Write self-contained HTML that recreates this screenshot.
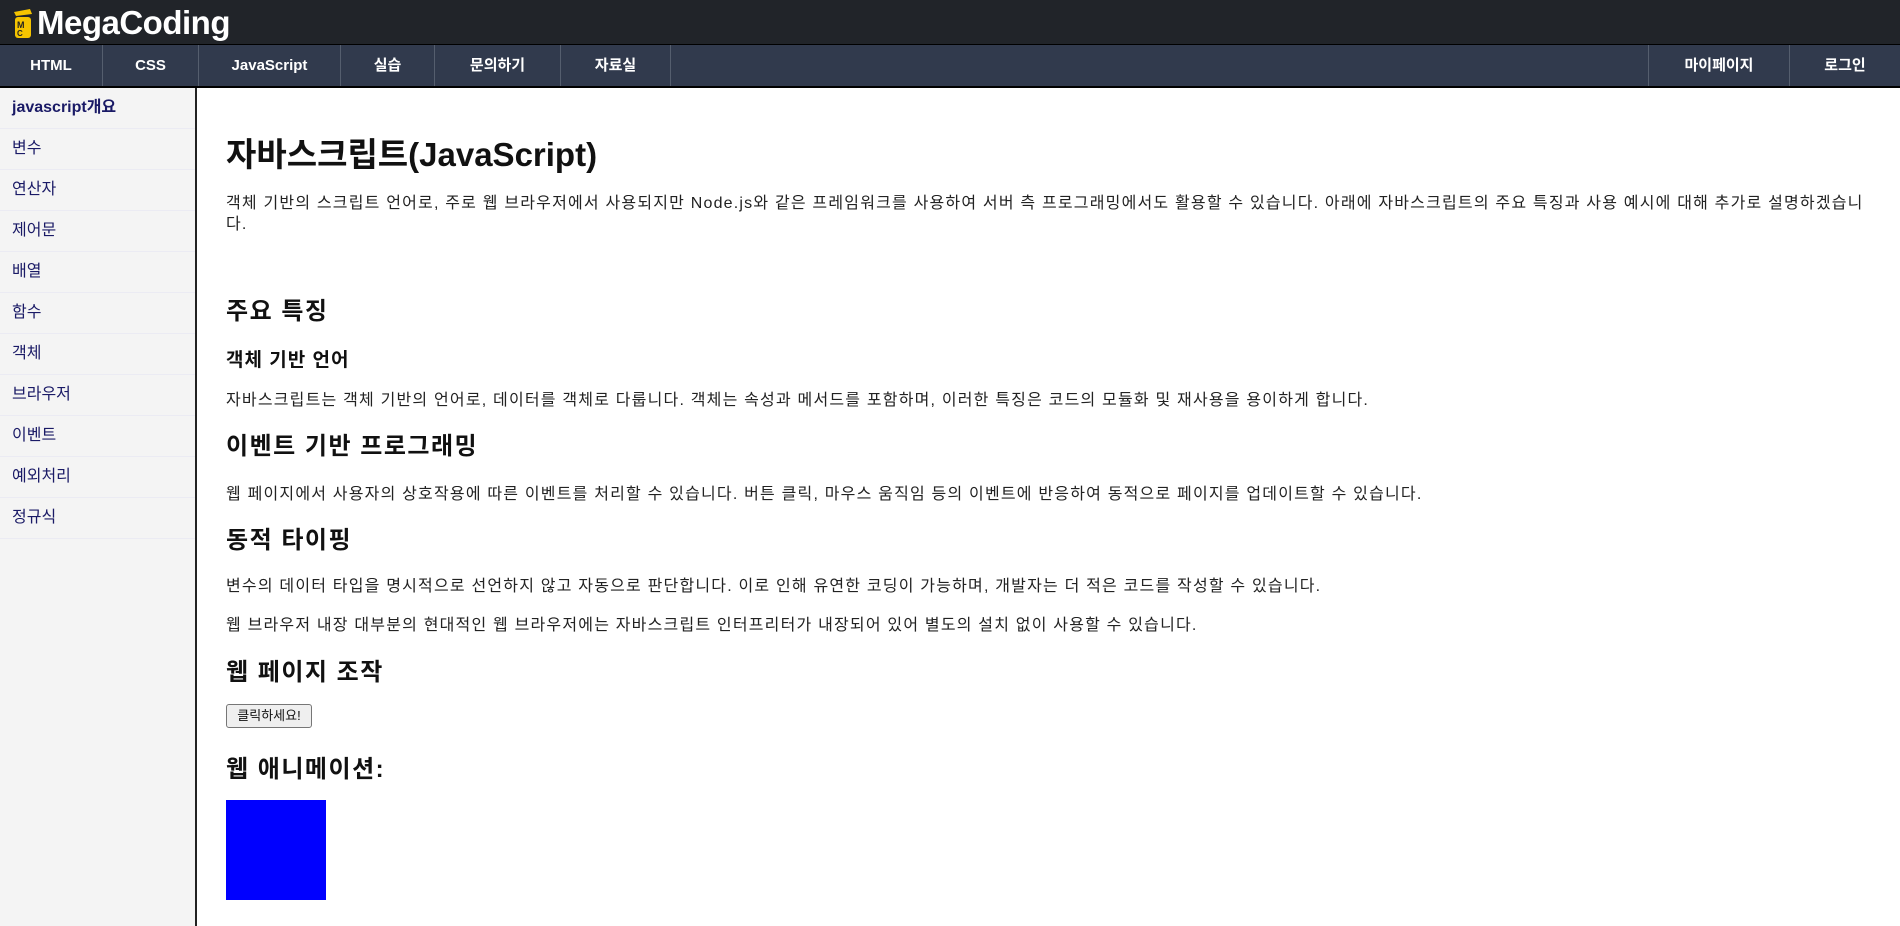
<!DOCTYPE html>
<html><head><meta charset="utf-8"><style>
*{margin:0;padding:0;box-sizing:border-box}
body{width:1900px;height:926px;overflow:hidden;background:#fff;font-family:"Liberation Sans","Noto Sans CJK KR",sans-serif;position:relative}
#top{position:absolute;left:0;top:0;width:1900px;height:45px;background:#212429;border-bottom:1px solid #000}
#logo{position:absolute;left:37px;top:4px;color:#fff;font-weight:bold;font-size:33px;letter-spacing:-0.5px}
#nav{position:absolute;left:0;top:45px;width:1900px;height:43px;background:#313a4d;border-bottom:2px solid #000}
.ni{position:absolute;top:0;height:41px;line-height:41px;color:#fff;font-size:15px;font-weight:bold;text-align:center;border-right:1px solid #555e6e}
#side{position:absolute;left:0;top:88px;width:197px;height:838px;background:#f4f4f4;border-right:2px solid #222}
.si{height:41px;line-height:40px;padding-left:12px;font-size:16px;color:#1a1a66;border-bottom:1px solid #ebebf3}
.t{position:absolute;left:226px;color:#111;white-space:nowrap}
.p{font-size:16px;color:#222;letter-spacing:1.2px}
.h2{font-size:24px;font-weight:bold;letter-spacing:1.5px}
.h3{font-size:19px;font-weight:bold;letter-spacing:1px}
</style></head><body>
<div id="top"><svg style="position:absolute;left:12px;top:8px" width="22" height="32" viewBox="0 0 22 32"><path d="M2 4 L18 1 L20 6 L4 8Z" fill="#f5c400"/><rect x="3" y="9" width="16" height="21" rx="3" fill="#f5c400"/><text x="5" y="20" font-size="9" font-weight="bold" fill="#222" font-family="Liberation Sans">M</text><text x="5" y="28" font-size="8" font-weight="bold" fill="#222" font-family="Liberation Sans">C</text></svg><div id="logo">MegaCoding</div></div>
<div id="nav">
<div class="ni" style="left:0;width:103px">HTML</div>
<div class="ni" style="left:103px;width:96px">CSS</div>
<div class="ni" style="left:199px;width:142px">JavaScript</div>
<div class="ni" style="left:341px;width:94px">실습</div>
<div class="ni" style="left:435px;width:126px">문의하기</div>
<div class="ni" style="left:561px;width:110px">자료실</div>
<div class="ni" style="left:1648px;width:142px;border-left:1px solid #555e6e">마이페이지</div>
<div class="ni" style="left:1790px;width:110px;border-right:none">로그인</div>
</div>
<div id="side">
<div class="si" style="font-weight:bold">javascript개요</div>
<div class="si">변수</div><div class="si">연산자</div><div class="si">제어문</div><div class="si">배열</div><div class="si">함수</div><div class="si">객체</div><div class="si">브라우저</div><div class="si">이벤트</div><div class="si">예외처리</div><div class="si">정규식</div>
</div>
<div class="t" style="top:128px;font-size:33px;font-weight:bold">자바스크립트(JavaScript)</div>
<div class="t p" style="top:193px;line-height:21px">객체 기반의 스크립트 언어로, 주로 웹 브라우저에서 사용되지만 Node.js와 같은 프레임워크를 사용하여 서버 측 프로그래밍에서도 활용할 수 있습니다. 아래에 자바스크립트의 주요 특징과 사용 예시에 대해 추가로 설명하겠습니<br>다.</div>
<div class="t h2" style="top:291px">주요 특징</div>
<div class="t h3" style="top:345px">객체 기반 언어</div>
<div class="t p" style="top:386px">자바스크립트는 객체 기반의 언어로, 데이터를 객체로 다룹니다. 객체는 속성과 메서드를 포함하며, 이러한 특징은 코드의 모듈화 및 재사용을 용이하게 합니다.</div>
<div class="t h2" style="top:426px">이벤트 기반 프로그래밍</div>
<div class="t p" style="top:480px">웹 페이지에서 사용자의 상호작용에 따른 이벤트를 처리할 수 있습니다. 버튼 클릭, 마우스 움직임 등의 이벤트에 반응하여 동적으로 페이지를 업데이트할 수 있습니다.</div>
<div class="t h2" style="top:520px">동적 타이핑</div>
<div class="t p" style="top:572px">변수의 데이터 타입을 명시적으로 선언하지 않고 자동으로 판단합니다. 이로 인해 유연한 코딩이 가능하며, 개발자는 더 적은 코드를 작성할 수 있습니다.</div>
<div class="t p" style="top:611px">웹 브라우저 내장 대부분의 현대적인 웹 브라우저에는 자바스크립트 인터프리터가 내장되어 있어 별도의 설치 없이 사용할 수 있습니다.</div>
<div class="t h2" style="top:652px">웹 페이지 조작</div>
<div style="position:absolute;left:226px;top:704px;width:86px;height:24px;border:1px solid #767676;border-radius:3px;background:#efefef;font-size:13px;text-align:center;line-height:22px;color:#111">클릭하세요!</div>
<div class="t h2" style="top:749px">웹 애니메이션:</div>
<div style="position:absolute;left:226px;top:800px;width:100px;height:100px;background:#00f"></div>
</body></html>
